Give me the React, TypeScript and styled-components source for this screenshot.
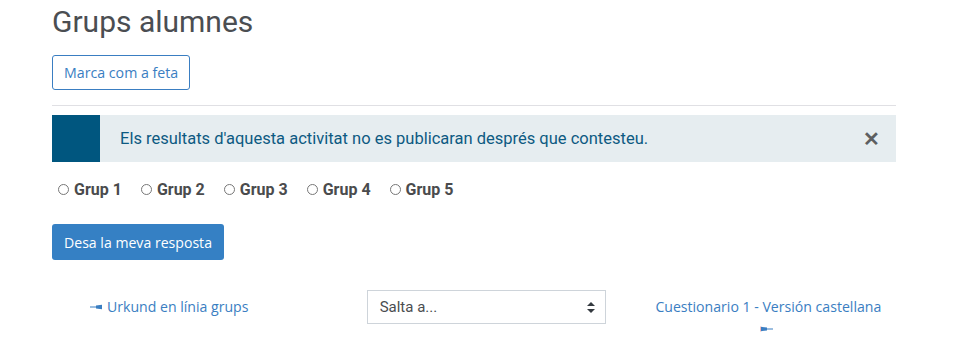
import styled, { createGlobalStyle } from 'styled-components';

const GlobalStyle = createGlobalStyle`
  body {
    margin: 0;
    background: #fff;
    font-family: Roboto, "Liberation Sans", sans-serif;
    font-size: 15px;
    color: #4a4d50;
  }
`;

const Page = styled.div`
  width: 844px;
  margin-left: 52px;
  padding-top: 4px;
`;

const Title = styled.h2`
  margin: 0 0 15px;
  font-size: 30px;
  font-weight: 400;
  line-height: 36px;
  color: #4b4e52;
`;

const OutlineButton = styled.button`
  display: block;
  height: 35px;
  padding: 0 11px;
  border: 1px solid #3a7ec2;
  border-radius: 3px;
  background: #fff;
  color: #3a7ec2;
  font-family: "Segoe UI", "Open Sans", Roboto, sans-serif;
  font-size: 14.2px;
`;

const Rule = styled.hr`
  margin: 15px 0 9px;
  border: 0;
  border-top: 1px solid #e0e0e4;
`;

const Alert = styled.div`
  display: flex;
  align-items: center;
  height: 47px;
  background: #e6edf0;
`;

const AlertMark = styled.div`
  align-self: stretch;
  width: 48px;
  background: #00567f;
`;

const AlertText = styled.div`
  flex: 1;
  padding-left: 20px;
  color: #0d5a82;
  font-size: 16.5px;
`;

const Close = styled.span`
  margin-right: 16px;
  color: #5d5f61;
  font-size: 20px;
  font-weight: 700;
  line-height: 1;
`;

const Options = styled.div`
  display: flex;
  gap: 19px;
  margin: 18px 0 0 6px;
`;

const Option = styled.label`
  display: flex;
  align-items: center;
  gap: 5px;
  font-weight: 700;
  font-size: 16px;
  color: #4a4b4d;
`;

const Radio = styled.span`
  width: 9px;
  height: 9px;
  border: 1px solid #777;
  border-radius: 50%;
`;

const PrimaryButton = styled.button`
  display: block;
  height: 36px;
  margin-top: 25px;
  padding: 0 12px;
  border: 0;
  border-radius: 3px;
  background: #3580c4;
  color: #fff;
  font-family: "Segoe UI", "Open Sans", Roboto, sans-serif;
  font-size: 14.1px;
`;

const NavRow = styled.div`
  display: grid;
  grid-template-columns: 1fr 1fr 1fr;
  column-gap: 30px;
  margin-top: 30px;
`;

const NavLink = styled.a<{ $align: 'left' | 'center' }>`
  color: #3a7ec2;
  font-family: "Segoe UI", "Open Sans", Roboto, sans-serif;
  font-size: 14.1px;
  text-decoration: none;
  line-height: 22px;
  text-align: ${({ $align }) => $align};
  padding: ${({ $align }) => ($align === 'left' ? '6px 0 0 38px' : '6px 12px 0 18px')};
`;

const Select = styled.div`
  justify-self: end;
  display: flex;
  align-items: center;
  justify-content: space-between;
  width: 239px;
  height: 34px;
  box-sizing: border-box;
  margin-right: -1px;
  padding: 0 10px 0 12px;
  border: 1px solid #ced4da;
  color: #4a4d50;
  font-size: 15px;
`;

const Arrow = ({ dir }: { dir: 'left' | 'right' }) => (
  <svg width="13" height="6" viewBox="0 0 13 6" style={{ verticalAlign: 'middle', margin: '0 4px 2px 0' }}>
    {dir === 'left' ? (
      <g fill="#3a7ec2">
        <rect x="0" y="2.5" width="7" height="1" />
        <path d="M6 1.5 L12 0.8 L12 5.2 L6 4.5 Z" />
      </g>
    ) : (
      <g fill="#3a7ec2">
        <rect x="0" y="0.5" width="1" height="5" fill="#f2b7b7" />
        <path d="M1 0.8 L7 1.5 L7 4.5 L1 5.2 Z" />
        <rect x="6" y="2.5" width="7" height="1" />
      </g>
    )}
  </svg>
);

const Updown = () => (
  <svg width="8" height="11" viewBox="0 0 8 11">
    <path d="M4 0 L8 4 L0 4 Z M4 11 L8 7 L0 7 Z" fill="#343a40" />
  </svg>
);

const groups = ['Grup 1', 'Grup 2', 'Grup 3', 'Grup 4', 'Grup 5'];

const App = () => (
  <>
    <GlobalStyle />
    <Page>
      <Title>Grups alumnes</Title>
      <OutlineButton>Marca com a feta</OutlineButton>
      <Rule />
      <Alert>
        <AlertMark />
        <AlertText>Els resultats d'aquesta activitat no es publicaran després que contesteu.</AlertText>
        <Close>✕</Close>
      </Alert>
      <Options>
        {groups.map((g) => (
          <Option key={g}>
            <Radio />
            {g}
          </Option>
        ))}
      </Options>
      <PrimaryButton>Desa la meva resposta</PrimaryButton>
      <NavRow>
        <NavLink $align="left" href="#">
          <Arrow dir="left" />
          Urkund en línia grups
        </NavLink>
        <Select>
          Salta a...
          <Updown />
        </Select>
        <NavLink $align="center" href="#">
          Cuestionario 1 - Versión castellana <Arrow dir="right" />
        </NavLink>
      </NavRow>
    </Page>
  </>
);

export default App;
